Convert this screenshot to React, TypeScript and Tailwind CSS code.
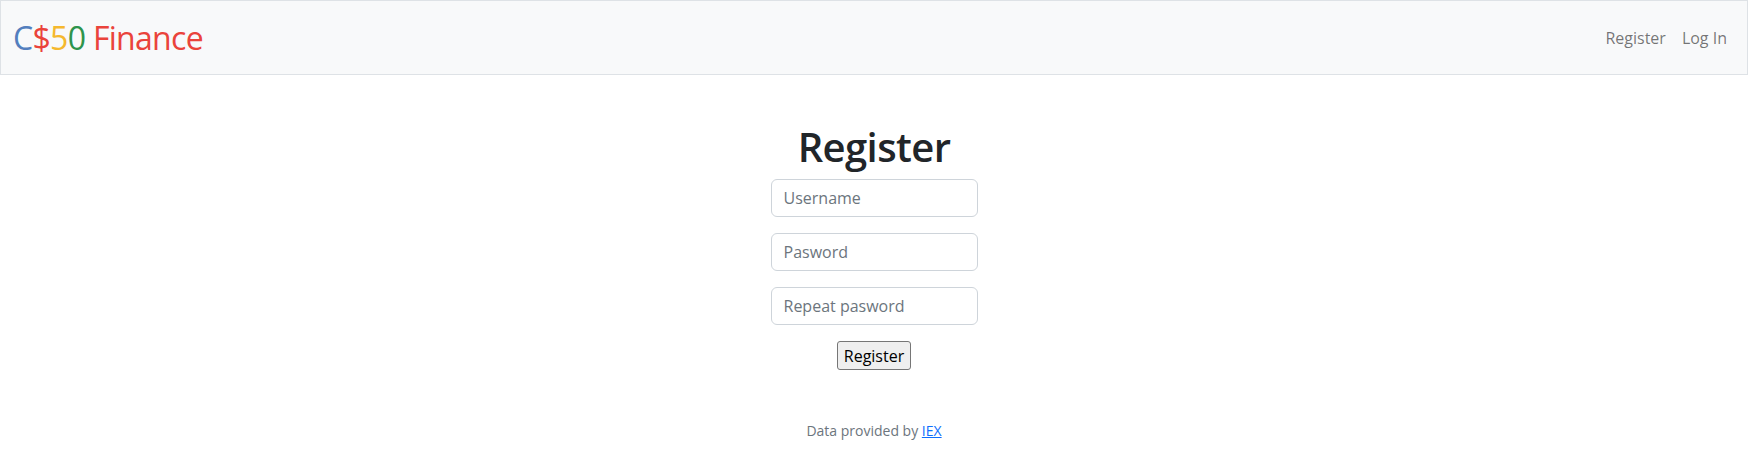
import React from "react";

export default function App() {
  return (
    <div className="min-h-[450px] bg-white font-['Open_Sans',sans-serif] text-[16px] leading-[1.5] text-[#212529]">
      <nav className="flex h-[75px] items-center justify-between border border-[#dee2e6] bg-[#f8f9fa] px-3">
        <a className="py-[5px] text-[32px] leading-[1.5] tracking-[-0.7px] no-underline">
          <span className="text-[#537fbe]">C</span>
          <span className="text-[#ea433b]">$</span>
          <span className="text-[#f5b82e]">5</span>
          <span className="text-[#2e944b]">0</span>{" "}
          <span className="text-[#ea433b]">Finance</span>
        </a>
        <ul className="flex">
          <li>
            <a className="block px-2 py-2 text-[rgba(0,0,0,0.55)]">Register</a>
          </li>
          <li>
            <a className="block px-2 py-2 text-[rgba(0,0,0,0.55)]">Log In</a>
          </li>
        </ul>
      </nav>
      <main className="flex flex-col items-center pt-12 pb-[50px] text-center">
        <h1 className="mb-2 text-[40px] font-semibold leading-[1.2] tracking-[-0.6px]">Register</h1>
        <input
          className="mb-4 h-[38px] w-[207px] rounded-[6px] border border-[#ced4da] px-3 py-[6px] text-[16px] text-[#212529] placeholder:text-[#6c757d] focus:outline-none"
          placeholder="Username"
          type="text"
        />
        <input
          className="mb-4 h-[38px] w-[207px] rounded-[6px] border border-[#ced4da] px-3 py-[6px] text-[16px] text-[#212529] placeholder:text-[#6c757d] focus:outline-none"
          placeholder="Pasword"
          type="password"
        />
        <input
          className="mb-4 h-[38px] w-[207px] rounded-[6px] border border-[#ced4da] px-3 py-[6px] text-[16px] text-[#212529] placeholder:text-[#6c757d] focus:outline-none"
          placeholder="Repeat pasword"
          type="password"
        />
        <button className="h-[29px] rounded-[3px] border border-[#767676] bg-[#efefef] px-[6px] text-[16px] leading-[24px] text-black">
          Register
        </button>
      </main>
      <footer className="text-center text-[14px] leading-[21px] text-[#6c757d]">
        Data provided by{" "}
        <a className="text-[#0d6efd] underline">IEX</a>
      </footer>
    </div>
  );
}
